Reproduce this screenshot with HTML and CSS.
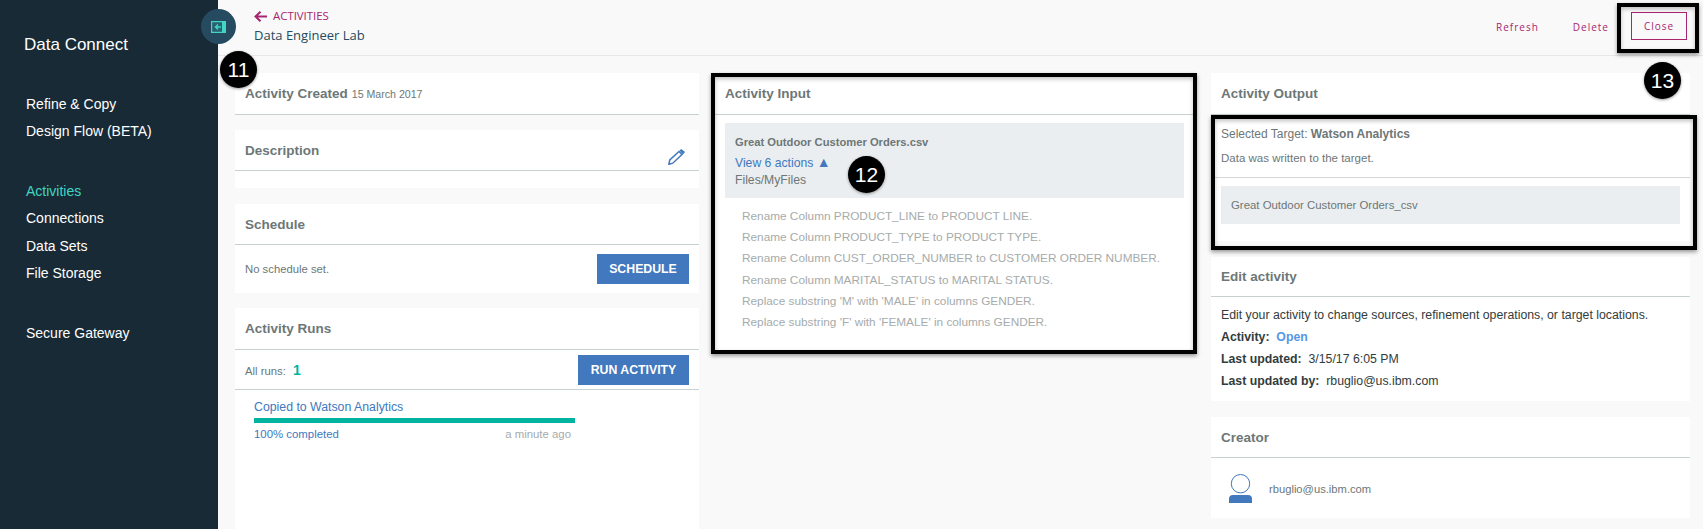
FILE: index.html
```html
<!DOCTYPE html>
<html lang="en">
<head>
  <meta charset="UTF-8">
  <title>Data Engineer Lab</title>
  <link rel="stylesheet" href="styles.css">
</head>
<body>
  <div class="app">
    <aside class="sidebar">
      <div class="brand">Data Connect</div>
      <nav class="nav-group">
        <a>Refine &amp; Copy</a>
        <a>Design Flow (BETA)</a>
      </nav>
      <nav class="nav-group nav-main">
        <a class="active">Activities</a>
        <a>Connections</a>
        <a>Data Sets</a>
        <a>File Storage</a>
      </nav>
      <nav class="nav-group">
        <a>Secure Gateway</a>
      </nav>
    </aside>

    <main class="main">
      <header class="topbar">
        <div class="crumbs">
          <a class="back">
            <svg width="13" height="11" viewBox="0 0 13 11"><path d="M13 5.500H2M6.500 .7 1.500 5.500l5 4.800" fill="none" stroke="#a8256f" stroke-width="2"/></svg>
            ACTIVITIES
          </a>
          <div class="page-title">Data Engineer Lab</div>
        </div>
        <div class="actions">
          <a>Refresh</a>
          <a>Delete</a>
          <a class="btn-close">Close</a>
        </div>
      </header>

      <div class="columns">
        <div class="col col-left">
          <section class="card card-created">
            <h2>Activity Created <small>15 March 2017</small></h2>
          </section>
          <section class="card card-desc">
            <h2>Description
              <svg class="pencil" width="17" height="16" viewBox="0 0 17 16"><path d="M.8 15.300 1.800 11 11 2.500 14 5.500 4.800 14.200z" fill="#fff" stroke="#4178be" stroke-width="1.500"/><path d="M11.500 1.500 13.200 0 17 3 15 5.500z" fill="#4178be"/></svg>
            </h2>
          </section>
          <section class="card card-schedule">
            <h2>Schedule</h2>
            <div class="row row-schedule">
              <span>No schedule set.</span>
              <button class="btn btn-schedule">SCHEDULE</button>
            </div>
          </section>
          <section class="card card-runs">
            <h2>Activity Runs</h2>
            <div class="row row-runs">
              <span>All runs: <b class="count">1</b></span>
              <button class="btn btn-run">RUN ACTIVITY</button>
            </div>
            <div class="run">
              <a class="run-name">Copied to Watson Analytics</a>
              <div class="bar"></div>
              <div class="run-meta">
                <span>100% completed</span>
                <span class="ago">a minute ago</span>
              </div>
            </div>
          </section>
        </div>

        <div class="col col-mid">
          <section class="card card-input">
            <h2>Activity Input</h2>
            <div class="source">
              <div class="source-name">Great Outdoor Customer Orders.csv</div>
              <a class="source-link">View 6 actions <span class="caret">&#9650;</span></a>
              <div class="source-path">Files/MyFiles</div>
            </div>
            <ul class="steps">
              <li>Rename Column PRODUCT_LINE to PRODUCT LINE.</li>
              <li>Rename Column PRODUCT_TYPE to PRODUCT TYPE.</li>
              <li>Rename Column CUST_ORDER_NUMBER to CUSTOMER ORDER NUMBER.</li>
              <li>Rename Column MARITAL_STATUS to MARITAL STATUS.</li>
              <li>Replace substring 'M' with 'MALE' in columns GENDER.</li>
              <li>Replace substring 'F' with 'FEMALE' in columns GENDER.</li>
            </ul>
          </section>
        </div>

        <div class="col col-right">
          <section class="card card-output">
            <h2>Activity Output</h2>
            <div class="target">
              <div class="target-name">Selected Target: <b>Watson Analytics</b></div>
              <div class="target-note">Data was written to the target.</div>
            </div>
            <div class="output-file">Great Outdoor Customer Orders_csv</div>
          </section>
          <section class="card card-edit">
            <h2>Edit activity</h2>
            <div class="edit-body">
              <p>Edit your activity to change sources, refinement operations, or target locations.</p>
              <p><b>Activity:</b>&nbsp; <a class="open">Open</a></p>
              <p><b>Last updated:</b>&nbsp; 3/15/17 6:05 PM</p>
              <p><b>Last updated by:</b>&nbsp; rbuglio@us.ibm.com</p>
            </div>
          </section>
          <section class="card card-creator">
            <h2>Creator</h2>
            <div class="creator">
              <svg width="23" height="29" viewBox="0 0 23 29"><circle cx="11.500" cy="9.700" r="9.200" fill="#fff" stroke="#4178be" stroke-width="1"/><path d="M0 29v-4a4 4 0 0 1 4-4h15a4 4 0 0 1 4 4v4z" fill="#4178be"/></svg>
              <span>rbuglio@us.ibm.com</span>
            </div>
          </section>
        </div>
      </div>
    </main>
  </div>

  <!-- sidebar toggle sits across the sidebar edge -->
  <button class="toggle">
    <svg width="15" height="12" viewBox="0 0 15 12"><path d="M.6.6h13.800v10.800H.6z" fill="#2a5f6e" stroke="#41d6c3" stroke-width="1.200"/><path d="M11 0h4v12h-4z" fill="#41d6c3"/><path d="M10 6H4.500M7 3.500 4.500 6 7 8.500" fill="none" stroke="#41d6c3" stroke-width="1.400"/></svg>
  </button>

  <!-- annotations drawn over the screenshot -->
  <div class="frame frame-close"></div>
  <div class="frame frame-input"></div>
  <div class="frame frame-output"></div>
  <div class="badge badge-11">11</div>
  <div class="badge badge-12">12</div>
  <div class="badge badge-13">13</div>
</body>
</html>
```

FILE: styles.css
```css
* {
  box-sizing: border-box;
}
html, body {
  margin: 0;
  height: 529px;
  overflow: hidden;
}
body {
  font-family: "Liberation Sans", Arial, sans-serif;
  background-color: #f9f9f9;
  color: #6d7777;
  position: relative;
}
.app {
  display: flex;
  height: 529px;
}

/* sidebar */
.sidebar {
  width: 218px;
  flex: none;
  background-color: #182a36;
  color: #fff;
  padding: 35px 0 0 26px;
}
.brand {
  font-size: 17px;
  line-height: 20px;
  margin: 0 0 36px -2px;
}
.nav-group {
  margin-bottom: 33px;
}
.nav-group a {
  display: block;
  font-size: 14px;
  line-height: 27px;
}
.nav-main {
  margin-bottom: 32px;
}
.nav-main a {
  line-height: 27.400px;
}
.nav-group a.active {
  color: #41d6c3;
}
.toggle {
  position: absolute;
  left: 201px;
  top: 9px;
  width: 35px;
  height: 35px;
  border: 0;
  border-radius: 50%;
  background-color: #264a60;
  padding: 0;
  display: flex;
  align-items: center;
  justify-content: center;
}

/* top bar */
.main {
  flex: 1;
  min-width: 0;
}
.topbar {
  height: 56px;
  border-bottom: 1px solid #e8e8e8;
  display: flex;
  justify-content: space-between;
  padding: 9px 16px 0 36px;
}
.back {
  display: flex;
  align-items: center;
  gap: 6px;
  color: #a8256f;
  font-family: "Open Sans", sans-serif;
  font-size: 11.400px;
  line-height: 14px;
}
.page-title {
  font-family: "Open Sans", sans-serif;
  font-size: 13px;
  line-height: 18px;
  color: #264a60;
  margin-top: 3px;
}
.actions {
  display: flex;
  align-items: flex-start;
  gap: 34px;
  font-family: "Open Sans", sans-serif;
  font-size: 10px;
  letter-spacing: 1px;
  color: #a8256f;
}
.actions a {
  line-height: 18px;
  margin-top: 9px;
}
.actions a.btn-close {
  width: 56px;
  height: 28px;
  line-height: 26px;
  margin: 3px 0 0 -12px;
  text-align: center;
  border: 1px solid #a8256f;
}

/* columns and cards */
.columns {
  display: flex;
  gap: 16px;
  padding: 17px 13px 0 17px;
}
.col {
  height: 456px;
  display: flex;
  flex-direction: column;
  gap: 16px;
}
.col-left {
  width: 464px;
  gap: 15px;
}
.col-mid {
  width: 480px;
}
.col-right {
  width: 479px;
}
.card {
  background-color: #fff;
}
.card h2 {
  margin: 0;
  height: 42px;
  padding: 0 10px;
  display: flex;
  align-items: center;
  font-size: 13.500px;
  font-weight: bold;
  color: #6d7777;
  border-bottom: 1px solid #c7d1d1;
  position: relative;
}
.card h2 small {
  font-size: 10.600px;
  font-weight: normal;
  margin-left: 4px;
}
.card-desc {
  height: 58px;
  margin-bottom: 1px;
}
.card-desc h2 {
  height: 41px;
}
.pencil {
  position: absolute;
  right: 14px;
  top: 19px;
}
.row {
  display: flex;
  justify-content: space-between;
  align-items: center;
  padding: 0 10px 0 10px;
  font-size: 11.300px;
}
.card-schedule h2 {
  height: 41px;
}
.row-schedule {
  height: 48px;
}
.btn {
  border: 0;
  background-color: #4178be;
  color: #fff;
  font-family: "Liberation Sans", Arial, sans-serif;
  font-size: 12.300px;
  font-weight: bold;
  padding: 0;
}
.btn-schedule {
  width: 92px;
  height: 30px;
}
.btn-run {
  width: 111px;
  height: 30px;
}
.card-runs {
  flex: 1;
}
.row-runs {
  height: 40px;
  border-bottom: 1px solid #c7d1d1;
}
.count {
  color: #00b4a0;
  font-size: 14px;
  margin-left: 4px;
}
.run {
  padding: 9px 0 0 19px;
  width: 340px;
  font-size: 11.400px;
}
.run-name {
  color: #4178be;
  font-size: 12.300px;
  line-height: 16px;
  display: block;
}
.bar {
  height: 5px;
  background-color: #00b4a0;
  margin: 3px 0 5px;
}
.run-meta {
  display: flex;
  justify-content: space-between;
  color: #4178be;
  padding-right: 4px;
}
.ago {
  color: #a6abab;
}

/* activity input */
.card-input {
  height: 279px;
}
.source {
  margin: 8px 11px 0 10px;
  height: 75px;
  background-color: #ebeef0;
  padding: 11px 10px;
  font-size: 12.200px;
  line-height: 17px;
}
.source-name {
  font-weight: bold;
  font-size: 11.200px;
  margin-bottom: 4px;
}
.source-link {
  color: #4178be;
  display: block;
}
.caret {
  font-size: 14px;
  line-height: 14px;
}
.steps {
  list-style: none;
  margin: 8px 0 0;
  padding: 0 0 0 27px;
  font-size: 11.800px;
  line-height: 21.200px;
  color: #a6abab;
}

/* activity output */
.card-output {
  height: 168px;
}
.target {
  height: 63px;
  border-bottom: 1px solid #d4d8d8;
  padding: 11px 10px 0;
  font-size: 12px;
}
.target-name {
  line-height: 17px;
}
.target-note {
  font-size: 11.500px;
  line-height: 16px;
  margin-top: 7px;
}
.output-file {
  margin: 8px 10px 0;
  height: 38px;
  line-height: 38px;
  padding-left: 10px;
  background-color: #ebeef0;
  font-size: 11.400px;
}
.card-edit {
  height: 144px;
}
.card-edit h2 {
  height: 40px;
}
.edit-body {
  padding: 7px 10px;
  font-size: 12.300px;
  color: #323c3c;
}
.edit-body p {
  margin: 0;
  line-height: 22px;
}
.open {
  color: #5596e6;
  font-weight: bold;
}
.card-creator {
  height: 101px;
}
.card-creator h2 {
  height: 41px;
}
.creator {
  display: flex;
  align-items: center;
  gap: 17px;
  padding: 16px 0 0 18px;
  font-size: 11.200px;
}

/* annotations */
.frame {
  position: absolute;
  border: 4px solid #000;
  box-shadow: 0 2px 4px rgba(0,0,0,0.4), inset 0 2px 4px rgba(0,0,0,0.25);
  pointer-events: none;
}
.frame-close {
  left: 1617px;
  top: 3px;
  width: 82px;
  height: 50px;
}
.frame-input {
  left: 711px;
  top: 73px;
  width: 486px;
  height: 281px;
}
.frame-output {
  left: 1211px;
  top: 115px;
  width: 486px;
  height: 135px;
}
.badge {
  position: absolute;
  width: 37px;
  height: 37px;
  border-radius: 50%;
  background-color: #000;
  color: #fff;
  font-size: 21px;
  line-height: 37px;
  text-align: center;
  box-shadow: 0 1px 3px rgba(0,0,0,0.4);
}
.badge-11 {
  left: 220px;
  top: 51px;
}
.badge-12 {
  left: 848px;
  top: 156px;
}
.badge-13 {
  left: 1644px;
  top: 62px;
}
```
